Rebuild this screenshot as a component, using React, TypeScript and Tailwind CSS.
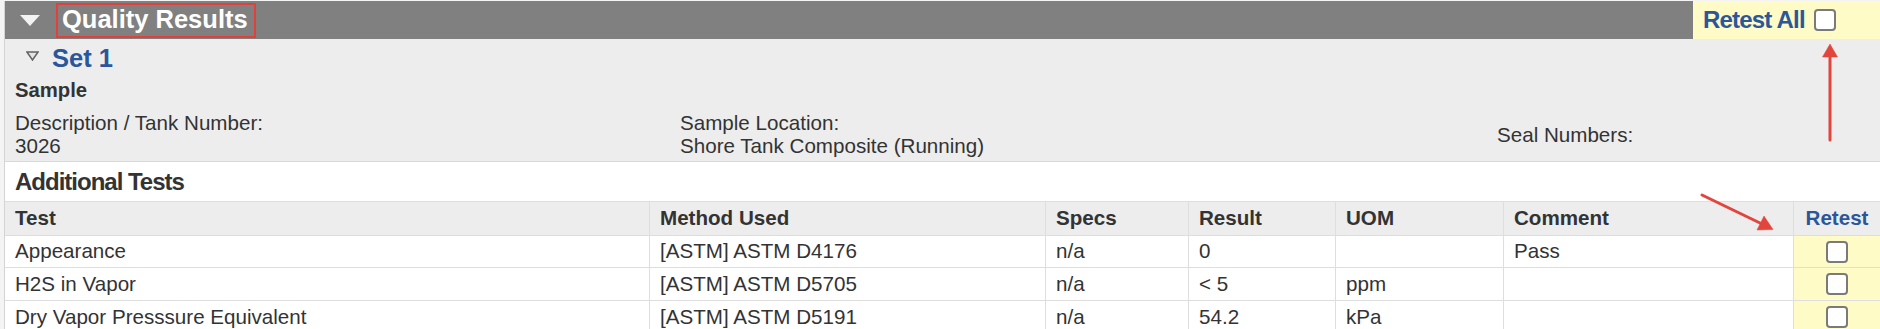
import React from "react";

const FONT = { fontFamily: '"Liberation Sans", Arial, sans-serif' };

const COLS = "grid grid-cols-[645px_396px_143px_147px_168px_290px_1fr]";

const rows = [
  { test: "Appearance", method: "[ASTM] ASTM D4176", specs: "n/a", result: "0", uom: "", comment: "Pass", h: "h-[32px]" },
  { test: "H2S in Vapor", method: "[ASTM] ASTM D5705", specs: "n/a", result: "< 5", uom: "ppm", comment: "", h: "h-[33px]" },
  { test: "Dry Vapor Presssure Equivalent", method: "[ASTM] ASTM D5191", specs: "n/a", result: "54.2", uom: "kPa", comment: "", h: "h-[33px]" },
];

function Box() {
  return (
    <input
      type="checkbox"
      readOnly
      className="m-0 h-[22px] w-[22px] appearance-none rounded-[4px] border-2 border-[#7a7a7a] bg-white"
    />
  );
}

function Cell({ children, last }: { children?: React.ReactNode; last?: boolean }) {
  return (
    <div className={`flex items-center truncate border-b border-[#dedede] pl-[10px] ${last ? "" : "border-r"}`}>
      {children}
    </div>
  );
}

export default function App() {
  return (
    <div className="relative h-[329px] w-full overflow-hidden bg-[#f4f4f4] pl-[4px] pt-px text-[#333]" style={FONT}>
      <div className="border-l border-[#d4d4d4]">
        {/* header bar */}
        <div className="flex h-[38px] items-center bg-[#808080]">
          <svg width="20" height="11" viewBox="0 0 20 11" className="ml-[15px]">
            <polygon points="0,0 20,0 10,11" fill="#f2f2f2" />
          </svg>
          <div className="ml-[16px] flex h-[35px] items-center border-2 border-[#e2403a] pl-[4px] pr-[6px] text-[25.5px] font-bold leading-none text-white">
            Quality Results
          </div>
          <div className="ml-auto flex h-full w-[187px] items-center bg-[#fffbc6] pl-[10px]">
            <span className="text-[24px] font-bold tracking-[-0.8px] text-[#2b579a]">Retest All</span>
            <span className="ml-[9px] flex">
              <Box />
            </span>
          </div>
        </div>

        {/* set block */}
        <div className="h-[123px] border-b border-[#d9d9d9] bg-[#ededed] pt-[5px]">
          <div className="flex h-[28px] items-center">
            <svg width="13" height="10" viewBox="0 0 13 10" className="ml-[21px] mt-[-4px]">
              <polygon points="0.9,0.9 12.1,0.9 6.5,9" fill="#e4e4e4" stroke="#626262" strokeWidth="1.5" />
            </svg>
            <span className="ml-[13px] text-[25.5px] font-bold leading-[28px] text-[#2b579a]">Set 1</span>
          </div>
          <div className="ml-[10px] mt-[7px] text-[20.3px] font-bold leading-[23px]">Sample</div>
          <div className="ml-[10px] mt-[9px] grid grid-cols-[665px_817px_1fr] text-[20.6px] leading-[23px]">
            <div>
              <div>Description / Tank Number:</div>
              <div>3026</div>
            </div>
            <div>
              <div>Sample Location:</div>
              <div>Shore Tank Composite (Running)</div>
            </div>
            <div className="flex items-center">Seal Numbers:</div>
          </div>
        </div>

        {/* additional tests */}
        <div className="flex h-[40px] items-center border-b border-[#dedede] bg-white pl-[10px] text-[24px] font-bold tracking-[-1px]">
          Additional Tests
        </div>

        <div className="bg-white text-[20.6px]">
          <div className={`${COLS} h-[34px] bg-[#ededed] font-bold`}>
            <Cell>Test</Cell>
            <Cell>Method Used</Cell>
            <Cell>Specs</Cell>
            <Cell>Result</Cell>
            <Cell>UOM</Cell>
            <Cell>Comment</Cell>
            <div className="flex items-center justify-center border-b border-[#dedede] text-[#2b579a]">Retest</div>
          </div>
          {rows.map((r) => (
            <div key={r.test} className={`${COLS} ${r.h}`}>
              <Cell>{r.test}</Cell>
              <Cell>{r.method}</Cell>
              <Cell>{r.specs}</Cell>
              <Cell>{r.result}</Cell>
              <Cell>{r.uom}</Cell>
              <Cell>{r.comment}</Cell>
              <div className="flex items-center justify-center border-b border-[#dedede] bg-[#fffbc6]">
                <Box />
              </div>
            </div>
          ))}
        </div>
      </div>

      {/* annotation arrows */}
      <svg className="pointer-events-none absolute left-0 top-0" width="1880" height="329">
        <g fill="#e2453c" stroke="#e2453c">
          <line x1="1830" y1="140" x2="1830" y2="56" strokeWidth="3" strokeLinecap="round" />
          <polygon points="1822.5,57 1830,44 1837.5,57" strokeWidth="0.5" />
          <line x1="1702" y1="195" x2="1760" y2="223" strokeWidth="3" strokeLinecap="round" />
          <polygon points="1757,230 1773,229.5 1764,216" strokeWidth="0.5" />
        </g>
      </svg>
    </div>
  );
}
